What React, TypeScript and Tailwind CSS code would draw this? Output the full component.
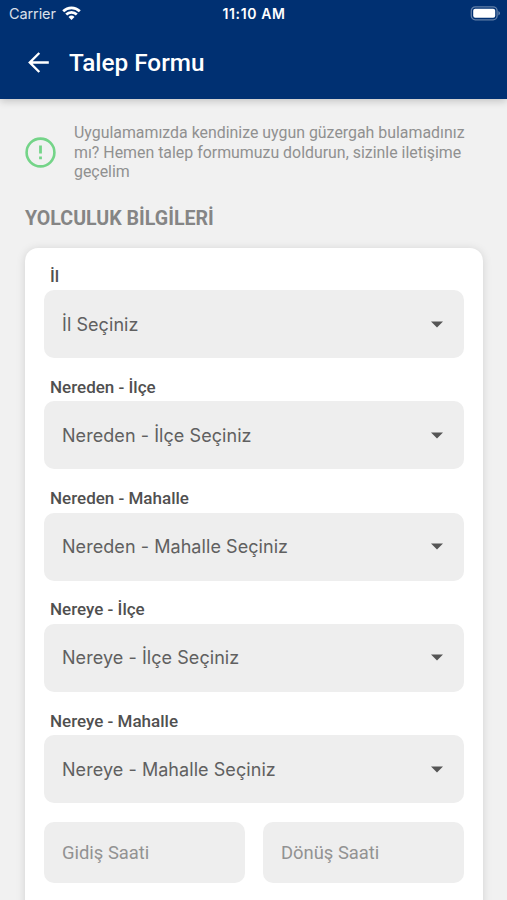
import React from 'react';

const selectFields = ['İl', 'Nereden - İlçe', 'Nereden - Mahalle', 'Nereye - İlçe', 'Nereye - Mahalle'];
const timeFields = ['Gidiş Saati', 'Dönüş Saati'];

const StatusBar: React.FC = () => (
  <div className="grid h-[27px] grid-cols-3 items-center pl-[9px] pr-[6px] font-['Inter'] text-white">
    <div className="flex items-center gap-[6px]">
      <span className="text-[14.5px] tracking-[-0.1px] opacity-85">Carrier</span>
      <svg width="19" height="15" viewBox="0 0 19 15" fill="none" stroke="white" strokeWidth="2.7">
        <path d="M1.2 5.2a11.8 11.8 0 0 1 16.6 0" />
        <path d="M4.2 8.5a7.5 7.5 0 0 1 10.6 0" />
        <path d="M9.5 14l-3-3.1a4.3 4.3 0 0 1 6 0z" fill="white" stroke="none" />
      </svg>
    </div>
    <span className="pr-[2px] text-center text-[14px] font-semibold tracking-[0.6px] whitespace-nowrap">11:10 AM</span>
    <svg className="justify-self-end" width="31" height="15" viewBox="0 0 31 15">
      <rect x="1.3" y="0.8" width="25.8" height="13" rx="4" fill="none" stroke="white" strokeOpacity="0.38" strokeWidth="1.3" />
      <rect x="3.2" y="2.8" width="22" height="9" rx="2" fill="white" />
      <path d="M28.4 5q1.6 .8 1.6 2.3T28.4 9.6z" fill="white" fillOpacity="0.4" />
    </svg>
  </div>
);

const Header: React.FC = () => (
  <header className="relative h-[98.5px] bg-[#003072] shadow-[0_2px_8px_rgba(0,0,0,0.2)]">
    <StatusBar />
    <div className="flex h-[71px] items-center gap-[20px] pl-[28px] text-white">
      <svg width="21" height="22" viewBox="0 0 21 22" fill="none" stroke="white" strokeWidth="2.4">
        <path d="M20.8 10.5H2M11.3 1L1.8 10.5l9.5 9.5" />
      </svg>
      <h1 className="pt-[1px] text-[24.3px] leading-[30px] font-medium">Talep Formu</h1>
    </div>
  </header>
);

const SelectField: React.FC<{ label: string }> = ({ label }) => (
  <div className="h-[111.25px]">
    <label className="block pt-[1px] pl-[6px] text-[17px] leading-[24px] font-medium text-[#505050]">{label}</label>
    <button className="mt-[2.5px] flex h-[68px] w-full items-center justify-between rounded-[10px] bg-[#eeeeee] pr-[21px] pl-[18px] font-['Inter'] text-[18px] tracking-[0.06px] text-[#606060]">
      <span>{label} Seçiniz</span>
      <svg width="12" height="7" viewBox="0 0 12 7" fill="#555">
        <path d="M0 0.4h12L6 6.6z" />
      </svg>
    </button>
  </div>
);

const App: React.FC = () => (
  <div className="h-[900px] overflow-hidden bg-[#f1f1f1] font-['Roboto',sans-serif]">
    <Header />
    <main className="px-[25px]">
      <div className="flex items-center gap-[18px] pt-[24.5px]">
        <svg className="shrink-0" width="31" height="31" viewBox="0 0 31 31" fill="none" stroke="#74d488">
          <circle cx="15.5" cy="15.5" r="13.9" strokeWidth="2.6" />
          <path d="M15.5 8.6v7.8M15.5 19.4v2.9" strokeWidth="2.8" />
        </svg>
        <p className="text-[15.9px] leading-[19.7px] whitespace-nowrap text-[#909090]">
          Uygulamamızda kendinize uygun güzergah bulamadınız<br />
          mı? Hemen talep formumuzu doldurun, sizinle iletişime<br />
          geçelim
        </p>
      </div>
      <h2 className="mt-[25px] text-[19.6px] leading-[24px] font-bold text-[#858585]">YOLCULUK BİLGİLERİ</h2>
      <section className="mt-[16.5px] h-[700px] w-[458px] rounded-[13px] bg-white px-[19px] pt-[15px] shadow-[0_1px_10px_rgba(0,0,0,0.13)]">
        {selectFields.map(label => (
          <SelectField key={label} label={label} />
        ))}
        <div className="mt-[3px] grid grid-cols-2 gap-[18px]">
          {timeFields.map(label => (
            <button key={label} className="h-[61px] rounded-[10px] bg-[#eeeeee] pl-[18px] text-left text-[18.4px] text-[#929292]">
              {label}
            </button>
          ))}
        </div>
      </section>
    </main>
  </div>
);

export default App;
